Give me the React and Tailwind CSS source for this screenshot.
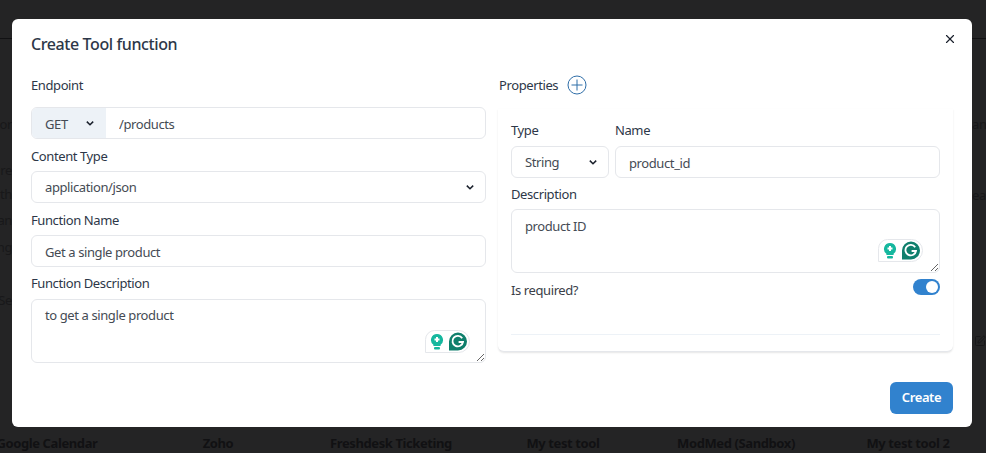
import React from "react";
import { X, SquarePen } from "lucide-react";

const inputClass =
  "w-full h-8 rounded-md border border-[#e5e7eb] bg-white px-[13px] pt-[2px] text-[13px] text-[#454b54] outline-none";

const textareaClass =
  "h-[64px] w-full rounded-md border border-[#e5e7eb] px-[13px] py-[6px] text-[13px] text-[#454b54] outline-none";

const Chevron = ({ className }) => (
  <svg
    className={className}
    width="10"
    height="10"
    viewBox="0 0 10 10"
    fill="none"
    stroke="#1a202c"
    strokeWidth="1.5"
  >
    <path d="M1.8 3.6 5 6.8 8.2 3.6" />
  </svg>
);

const Grammarly = ({ className }) => (
  <div
    className={`absolute flex h-[23px] w-[45px] items-center gap-[4px] rounded-tl-[10px] rounded-r-[12px] border border-[#e5e7eb] bg-white pl-[4px] ${className}`}
  >
    <svg width="14" height="18" viewBox="0 0 14 18">
      <path d="M7 1a6 6 0 0 1 3.6 10.8V13H3.4v-1.2A6 6 0 0 1 7 1z" fill="#15b79e" />
      <rect x="4" y="14" width="6" height="2.5" rx="1" fill="#15b79e" />
      <path d="M7 4v5M4.5 6.5h5" stroke="#fff" strokeWidth="2" />
    </svg>
    <svg width="20" height="19" viewBox="0 0 20 19">
      <path d="M10 .5a9 9 0 1 1 0 18H1v-9a9 9 0 0 1 9-9z" fill="#0f7f6c" />
      <path
        d="M14.2 6.2A5.3 5.3 0 1 0 15 10h-4.4"
        fill="none"
        stroke="#fff"
        strokeWidth="1.8"
      />
    </svg>
  </div>
);

const Label = ({ children }) => (
  <div className="text-[13px] leading-[18px] font-[450] text-[#2d3748]">{children}</div>
);

export default function App() {
  return (
    <div
      className="relative flex h-[453px] w-[986px] flex-col overflow-hidden bg-[#242425] text-[13px] tracking-[-0.4px] text-[#111113]"
      style={{ fontFamily: '"Noto Sans", sans-serif' }}
    >
      <div className="h-[39px] shrink-0 border-b border-[#111113]" />
      <div className="flex min-h-0 flex-1 justify-between">
        <div className="w-[12px] overflow-hidden pt-[73px] leading-[24px] whitespace-nowrap opacity-60">
          <div className="mb-[22px] flex justify-end">or</div>
          <div className="flex justify-end">re</div>
          <div className="flex justify-end">ith</div>
          <div className="mt-[2px] flex justify-end">an</div>
          <div className="mt-[3px] flex justify-end">ng</div>
          <div className="mt-[29px] flex justify-end">Se</div>
        </div>
        <div className="w-[14px] overflow-hidden pt-[73px] leading-[24px] opacity-60">
          <div className="mb-[47px]">an</div>
          <div>ea</div>
          <SquarePen className="mt-[128px] ml-[2px]" size={12} strokeWidth={2} />
        </div>
      </div>
      <div className="-ml-[39px] flex h-[26px] shrink-0 items-center pt-[8px] text-[13px] font-bold whitespace-nowrap">
        <div className="w-[172px] shrink-0 text-center">Google Calendar</div>
        <div className="w-[170px] shrink-0 text-center">Zoho</div>
        <div className="w-[176px] shrink-0 text-center">Freshdesk Ticketing</div>
        <div className="w-[168px] shrink-0 text-center">My test tool</div>
        <div className="w-[178px] shrink-0 text-center">ModMed (Sandbox)</div>
        <div className="w-[166px] shrink-0 text-center">My test tool 2</div>
      </div>

      <div className="absolute top-[19px] left-[12px] flex h-[408px] w-[960px] flex-col rounded-md bg-white px-[19px]">
        <button className="absolute top-[13px] right-[15px] text-[#1a202c]">
          <X size={14} strokeWidth={2} />
        </button>
        <div className="pt-[14px] text-[16px] leading-[22px] font-medium tracking-[-0.4px] text-[#2d3748]">
          Create Tool function
        </div>
        <div className="mt-[21px] flex gap-[12px]">
          <div className="flex w-[455px] shrink-0 flex-col">
            <Label>Endpoint</Label>
            <div className="mt-[13px] flex h-8 overflow-hidden rounded-md border border-[#e5e7eb]">
              <div className="flex w-[74px] shrink-0 items-center justify-between bg-[#edf2f7] pt-[3px] pr-[11px] pl-[13px] text-[#454b54]">
                GET
                <Chevron className="-mt-[3px]" />
              </div>
              <input
                className="min-w-0 flex-1 px-[13px] pt-[3px] text-[13px] text-[#454b54] outline-none"
                defaultValue="/products"
              />
            </div>
            <div className="mt-[8px]">
              <Label>Content Type</Label>
            </div>
            <div className="relative mt-[6px]">
              <select className={`${inputClass} appearance-none`} defaultValue="json">
                <option value="json">application/json</option>
              </select>
              <Chevron className="absolute top-[11px] right-[11px]" />
            </div>
            <div className="mt-[8px]">
              <Label>Function Name</Label>
            </div>
            <input className={`${inputClass} mt-[6px]`} defaultValue="Get a single product" />
            <div className="mt-[7px]">
              <Label>Function Description</Label>
            </div>
            <div className="relative mt-[7px] flex">
              <textarea className={textareaClass} defaultValue="to get a single product" />
              <Grammarly className="top-[31px] right-[16px]" />
            </div>
          </div>

          <div className="flex w-[455px] shrink-0 flex-col">
            <div className="flex h-[18px] items-center gap-[9px] pl-[1px]">
              <Label>Properties</Label>
              <svg width="20" height="20" viewBox="0 0 20 20" fill="none" stroke="#2f6ea8" strokeWidth="1">
                <circle cx="10" cy="10" r="9" />
                <path d="M10 4.5v11M4.5 10h11" />
              </svg>
            </div>
            <div className="mt-[15px] flex h-[243px] flex-col rounded-b-md border-b border-[#e5e7eb] bg-white px-[13px] pt-[12px] shadow-[0_1px_2px_rgba(0,0,0,0.1)]">
              <div className="flex gap-[6px]">
                <div className="w-[98px] shrink-0">
                  <Label>Type</Label>
                  <div className="relative mt-[7px]">
                    <select className={`${inputClass} appearance-none`} defaultValue="string">
                      <option value="string">String</option>
                    </select>
                    <Chevron className="absolute top-[11px] right-[11px]" />
                  </div>
                </div>
                <div className="min-w-0 flex-1">
                  <Label>Name</Label>
                  <input className={`${inputClass} mt-[7px]`} defaultValue="product_id" />
                </div>
              </div>
              <div className="mt-[7px]">
                <Label>Description</Label>
              </div>
              <div className="relative mt-[6px] flex">
                <textarea className={`${textareaClass} pt-[7px]`} defaultValue="product ID" />
                <Grammarly className="top-[30px] right-[17px]" />
              </div>
              <div className="mt-[6px] flex items-start justify-between">
                <div className="pt-[2px] text-[13px] leading-[18px] text-[#3a4048]">Is required?</div>
                <div className="flex h-4 w-[27px] items-center justify-end rounded-full bg-[#3182ce] p-[2px]">
                  <div className="h-3 w-3 rounded-full bg-white" />
                </div>
              </div>
              <div className="mt-[35px] border-t border-[#edf2f7]" />
            </div>
          </div>
        </div>
        <div className="mt-[19px] flex justify-end">
          <button className="h-8 w-[63px] rounded-md bg-[#3182ce] text-[13px] font-semibold text-white">
            Create
          </button>
        </div>
      </div>
    </div>
  );
}
